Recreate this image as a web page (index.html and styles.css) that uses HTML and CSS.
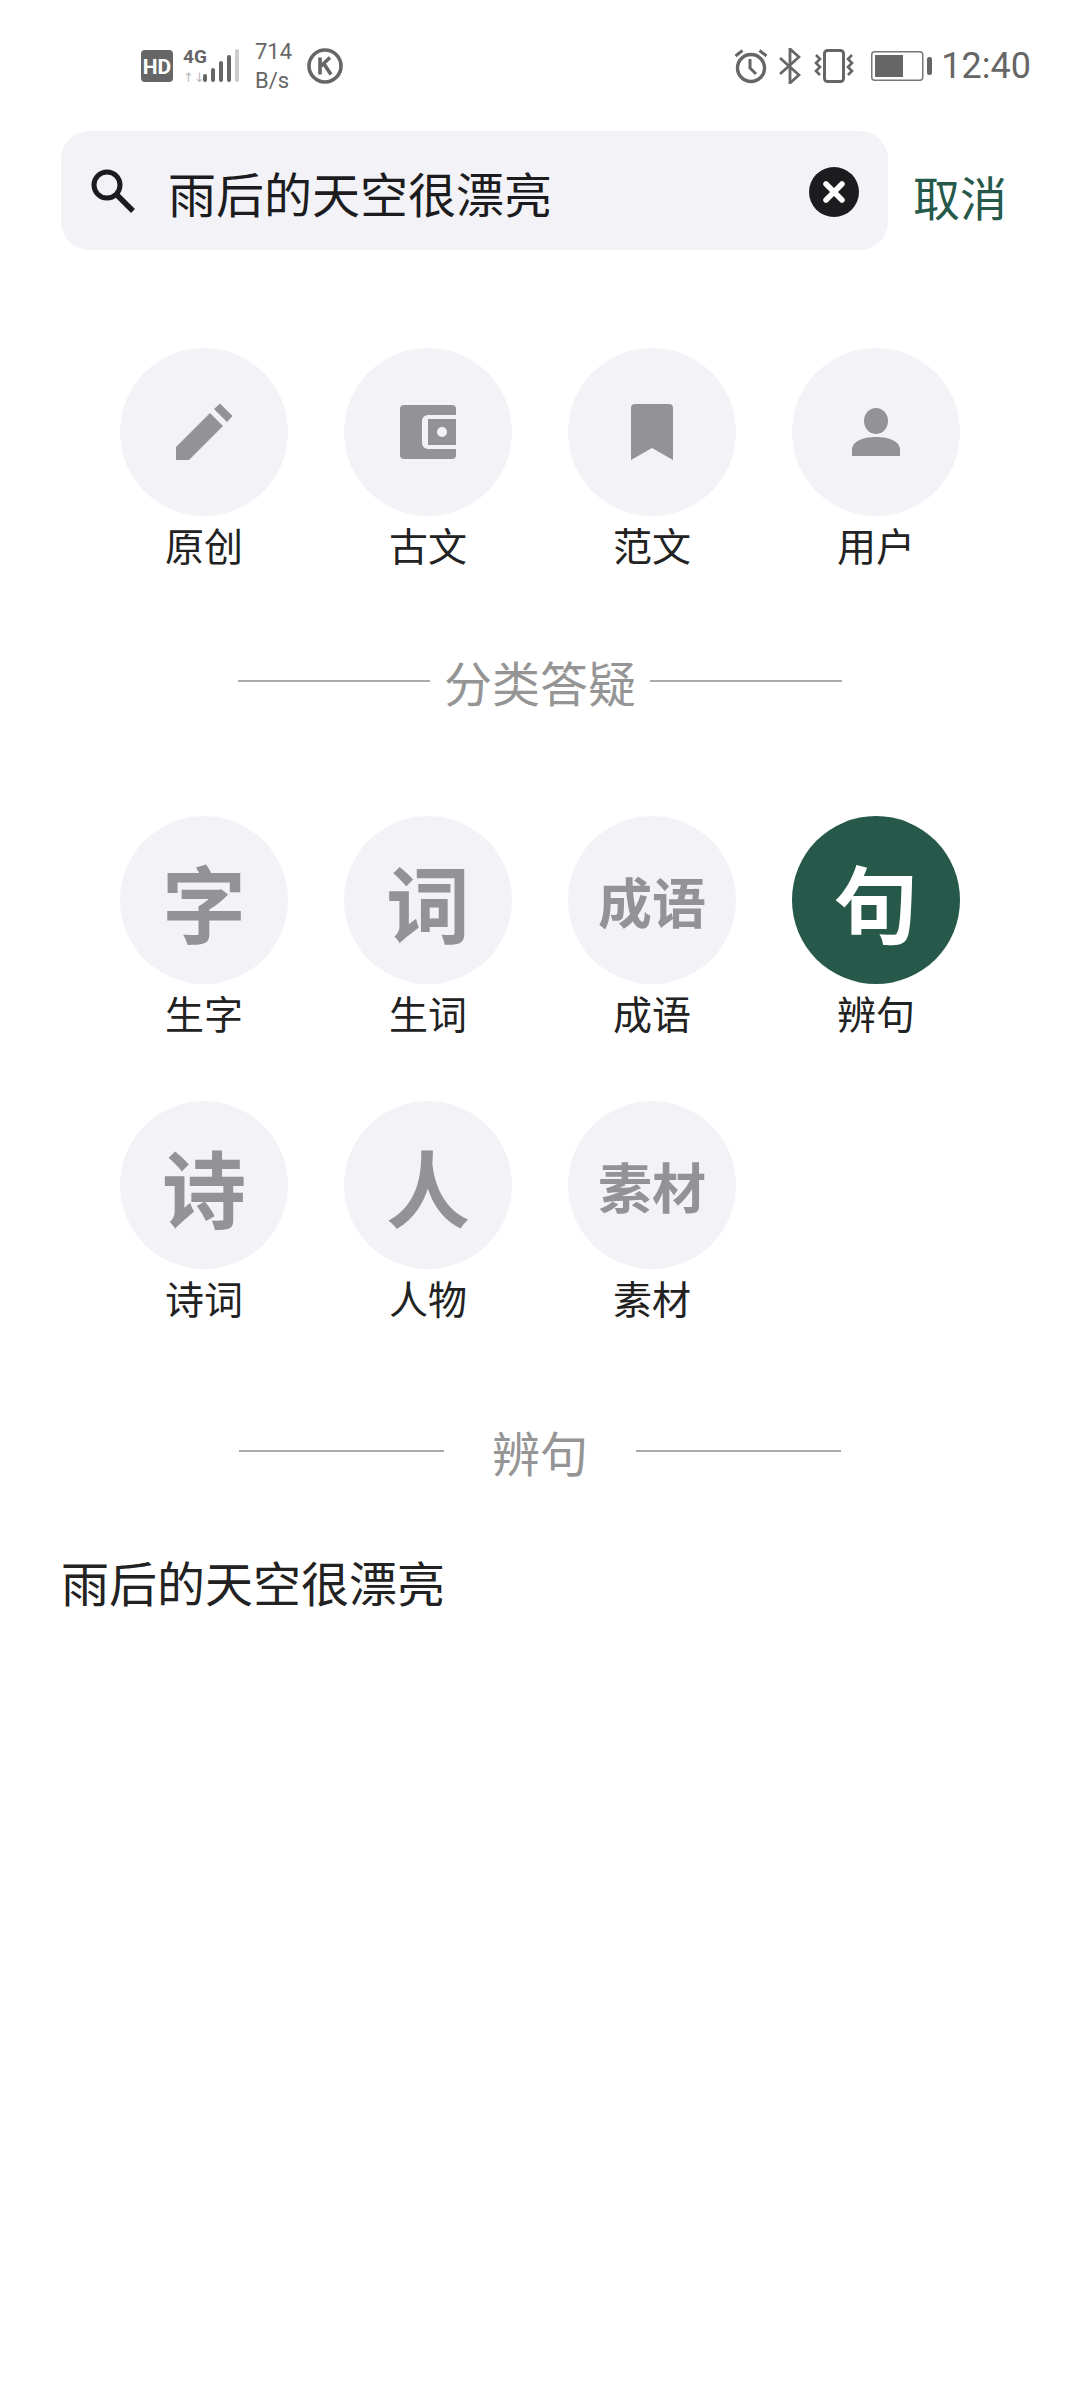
FILE: index.html
```html
<!DOCTYPE html>
<html lang="en">

<head>
    <meta charset="UTF-8" />
    <meta name="viewport" content="width=device-width, initial-scale=1.0" />
    <title>搜索</title>
    <link rel="stylesheet" href="styles.css">
</head>

<body>
    <header class="status-bar">
        <div class="status-group">
            <svg class="hd-icon" width="32" height="32" viewBox="0 0 32 32">
                <rect width="32" height="32" rx="4" fill="#666" />
                <text x="16" y="23.500" text-anchor="middle" class="hd-text">HD</text>
            </svg>
            <svg class="signal-icon" width="56" height="44" viewBox="0 -4 56 44">
                <text x="0" y="15" class="net-text">4G</text>
                <text x="0" y="34" class="arrows-text">↑↓</text>
                <rect x="20" y="26" width="4" height="8" rx="2" fill="#666" />
                <rect x="28" y="20" width="4" height="14" rx="2" fill="#666" />
                <rect x="36" y="13" width="4" height="21" rx="2" fill="#666" />
                <rect x="44" y="7" width="4" height="27" rx="2" fill="#666" />
                <rect x="52" y="1" width="4" height="33" rx="2" fill="#ccc" />
            </svg>
            <div class="net-speed">
                <span>714</span>
                <span>B/s</span>
            </div>
            <svg class="k-icon" width="36" height="36" viewBox="0 0 36 36">
                <circle cx="18" cy="18" r="16" fill="none" stroke="#666" stroke-width="3.600" />
                <path d="M13 9.500v17M14 18l9-8.500M17 16l7 10.500" fill="none" stroke="#666" stroke-width="3.600" />
            </svg>
        </div>
        <div class="status-group">
            <svg class="alarm-icon" width="34" height="36" viewBox="0 0 34 36">
                <circle cx="17" cy="20" r="13.500" fill="none" stroke="#666" stroke-width="3.400" />
                <path d="M16 11v9l6 6M1.500 8l7-5.500M32.500 8l-7-5.500" fill="none" stroke="#666" stroke-width="3" />
            </svg>
            <svg class="bt-icon" width="22" height="36" viewBox="0 0 22 36">
                <path d="M1 10l19 17-9 8V1l9 8L1 26" fill="none" stroke="#666" stroke-width="2.800" />
            </svg>
            <svg class="vibrate-icon" width="42" height="34" viewBox="0 0 42 34">
                <rect x="11.500" y="1.500" width="19" height="31" rx="3" fill="none" stroke="#666" stroke-width="3" />
                <path d="M3 6l4 4-4 4 4 4-4 4 4 4M39 6l-4 4 4 4-4 4 4 4-4 4" fill="none" stroke="#666" stroke-width="2.600" />
            </svg>
            <svg class="battery-icon" width="62" height="30" viewBox="0 0 62 30">
                <rect x="0.750" y="0.750" width="51" height="28.500" rx="3" fill="none" stroke="#777" stroke-width="1.500" />
                <rect x="4" y="4" width="28" height="22" fill="#666" />
                <rect x="56" y="6" width="5" height="18" rx="2" fill="#666" />
            </svg>
            <span class="clock">12:40</span>
        </div>
    </header>

    <div class="search-row">
        <div class="search-box">
            <svg class="search-icon" width="46" height="46" viewBox="0 0 46 46">
                <circle cx="17" cy="17" r="13" fill="none" stroke="#1c1c1e" stroke-width="5" />
                <path d="M26 26l17 17" stroke="#1c1c1e" stroke-width="5.500" />
            </svg>
            <span class="search-text">雨后的天空很漂亮</span>
            <svg class="clear-icon" width="50" height="50" viewBox="0 0 50 50">
                <circle cx="25" cy="25" r="25" fill="#1c1c1e" />
                <path d="M17 17l16 16M33 17L17 33" stroke="#fff" stroke-width="5.500" stroke-linecap="round" />
            </svg>
        </div>
        <span class="cancel">取消</span>
    </div>

    <section class="grid grid-types">
        <div class="item">
            <div class="circle">
                <svg width="60" height="60" viewBox="0 0 60 60">
                    <path d="M2 58V45L36 11l13 13-34 34zM40 7l6-5.500L58.500 14 53 20z" fill="#939396" />
                </svg>
            </div>
            <span class="label">原创</span>
        </div>
        <div class="item">
            <div class="circle">
                <svg width="60" height="60" viewBox="0 0 60 60">
                    <path fill-rule="evenodd" d="M6 3h48a4 4 0 0 1 4 4v6H30a6 6 0 0 0-6 6v22a6 6 0 0 0 6 6h28v6a4 4 0 0 1-4 4H6a4 4 0 0 1-4-4V7a4 4 0 0 1 4-4zM30 17h28v26H30zM44 25a5 5 0 1 0 0 10 5 5 0 0 0 0-10z" fill="#939396" />
                </svg>
            </div>
            <span class="label">古文</span>
        </div>
        <div class="item">
            <div class="circle">
                <svg width="44" height="58" viewBox="0 0 44 58">
                    <path d="M5 1h34a4 4 0 0 1 4 4v52L22 45 1 57V5a4 4 0 0 1 4-4z" fill="#939396" />
                </svg>
            </div>
            <span class="label">范文</span>
        </div>
        <div class="item">
            <div class="circle">
                <svg width="48" height="48" viewBox="0 0 48 48">
                    <ellipse cx="24" cy="13" rx="12" ry="13" fill="#939396" />
                    <path d="M0 48v-6c0-9 11-13 24-13s24 4 24 13v6z" fill="#939396" />
                </svg>
            </div>
            <span class="label">用户</span>
        </div>
    </section>

    <div class="divider divider-first">
        <span class="line"></span>
        <span class="divider-text">分类答疑</span>
        <span class="line"></span>
    </div>

    <section class="grid grid-cats">
        <div class="item">
            <div class="circle glyph">字</div>
            <span class="label">生字</span>
        </div>
        <div class="item">
            <div class="circle glyph">词</div>
            <span class="label">生词</span>
        </div>
        <div class="item">
            <div class="circle glyph glyph-small">成语</div>
            <span class="label">成语</span>
        </div>
        <div class="item">
            <div class="circle glyph active">句</div>
            <span class="label">辨句</span>
        </div>
        <div class="item">
            <div class="circle glyph">诗</div>
            <span class="label">诗词</span>
        </div>
        <div class="item">
            <div class="circle glyph">人</div>
            <span class="label">人物</span>
        </div>
        <div class="item">
            <div class="circle glyph glyph-small">素材</div>
            <span class="label">素材</span>
        </div>
    </section>

    <div class="divider divider-second">
        <span class="line"></span>
        <span class="divider-text">辨句</span>
        <span class="line"></span>
    </div>

    <p class="result">雨后的天空很漂亮</p>
</body>

</html>
```

FILE: styles.css
```css
body {
    margin: 0;
    width: 1080px;
    height: 2400px;
    overflow: hidden;
    background-color: #fff;
    color: #222;
    font-family: "Noto Sans CJK SC", Roboto, sans-serif;
}

.status-bar {
    display: flex;
    justify-content: space-between;
    align-items: center;
    height: 131px;
    padding: 0 49px 0 141px;
}

.status-group {
    display: flex;
    align-items: center;
}

.hd-text {
    font-family: Roboto, sans-serif;
    font-size: 21px;
    font-weight: 700;
    fill: #fff;
}

.net-text {
    font-family: Roboto, sans-serif;
    font-size: 19px;
    font-weight: 700;
    fill: #666;
}

.arrows-text {
    font-family: "DejaVu Sans", sans-serif;
    font-size: 13px;
    fill: #bbb;
}

.signal-icon {
    margin-left: 10px;
}

.net-speed {
    display: flex;
    flex-direction: column;
    margin-left: 16px;
    font-family: Roboto, sans-serif;
    font-size: 22px;
    line-height: 29px;
    color: #666;
}

.k-icon {
    margin-left: 15px;
}

.bt-icon {
    margin-left: 11px;
}

.vibrate-icon {
    margin-left: 12px;
}

.battery-icon {
    margin-left: 16px;
}

.clock {
    margin-left: 8px;
    font-family: Roboto, sans-serif;
    font-size: 36px;
    color: #666;
}

.search-row {
    display: flex;
    align-items: center;
    padding-left: 61px;
}

.search-box {
    display: flex;
    align-items: center;
    width: 827px;
    height: 119px;
    padding: 0 29px 0 29px;
    box-sizing: border-box;
    border-radius: 28px;
    background-color: #f3f3f7;
}

.search-text {
    flex: 1;
    margin: 3px 0 0 32px;
    font-size: 48px;
    line-height: 116px;
    color: #1c1c1e;
}

.clear-icon {
    margin-top: 2px;
}

.cancel {
    margin: 9px 0 0 25px;
    font-size: 47px;
    color: #27594a;
}

.grid {
    display: grid;
    grid-template-columns: repeat(4, 224px);
    grid-auto-rows: 285px;
    padding-left: 92px;
}

.grid-types {
    margin-top: 98px;
}

.grid-cats {
    margin-top: 100px;
}

.item {
    display: flex;
    flex-direction: column;
    align-items: center;
}

.circle {
    display: flex;
    justify-content: center;
    align-items: center;
    width: 168px;
    height: 168px;
    border-radius: 50%;
    background-color: #f3f3f7;
}

.glyph {
    font-size: 84px;
    font-weight: 700;
    color: #939396;
}

.glyph-small {
    font-size: 54px;
}

.active {
    background-color: #26594a;
    color: #fff;
}

.label {
    margin-top: 3px;
    font-size: 39px;
    line-height: 50px;
    color: #222;
}

.divider {
    display: flex;
    align-items: center;
    justify-content: center;
    height: 70px;
}

.divider-first {
    margin-top: 13px;
}

.divider-second {
    margin-top: 30px;
}

.line {
    width: 192px;
    height: 2px;
    background-color: #aaa;
}

.divider-text {
    margin: 0 14px;
    font-size: 48px;
    color: #959595;
}

.divider-second .line {
    width: 205px;
}

.divider-second .divider-text {
    margin: 0 48px;
}

.result {
    margin: 60px 0 0 61px;
    font-size: 48px;
    line-height: 70px;
    color: #222;
}
```
